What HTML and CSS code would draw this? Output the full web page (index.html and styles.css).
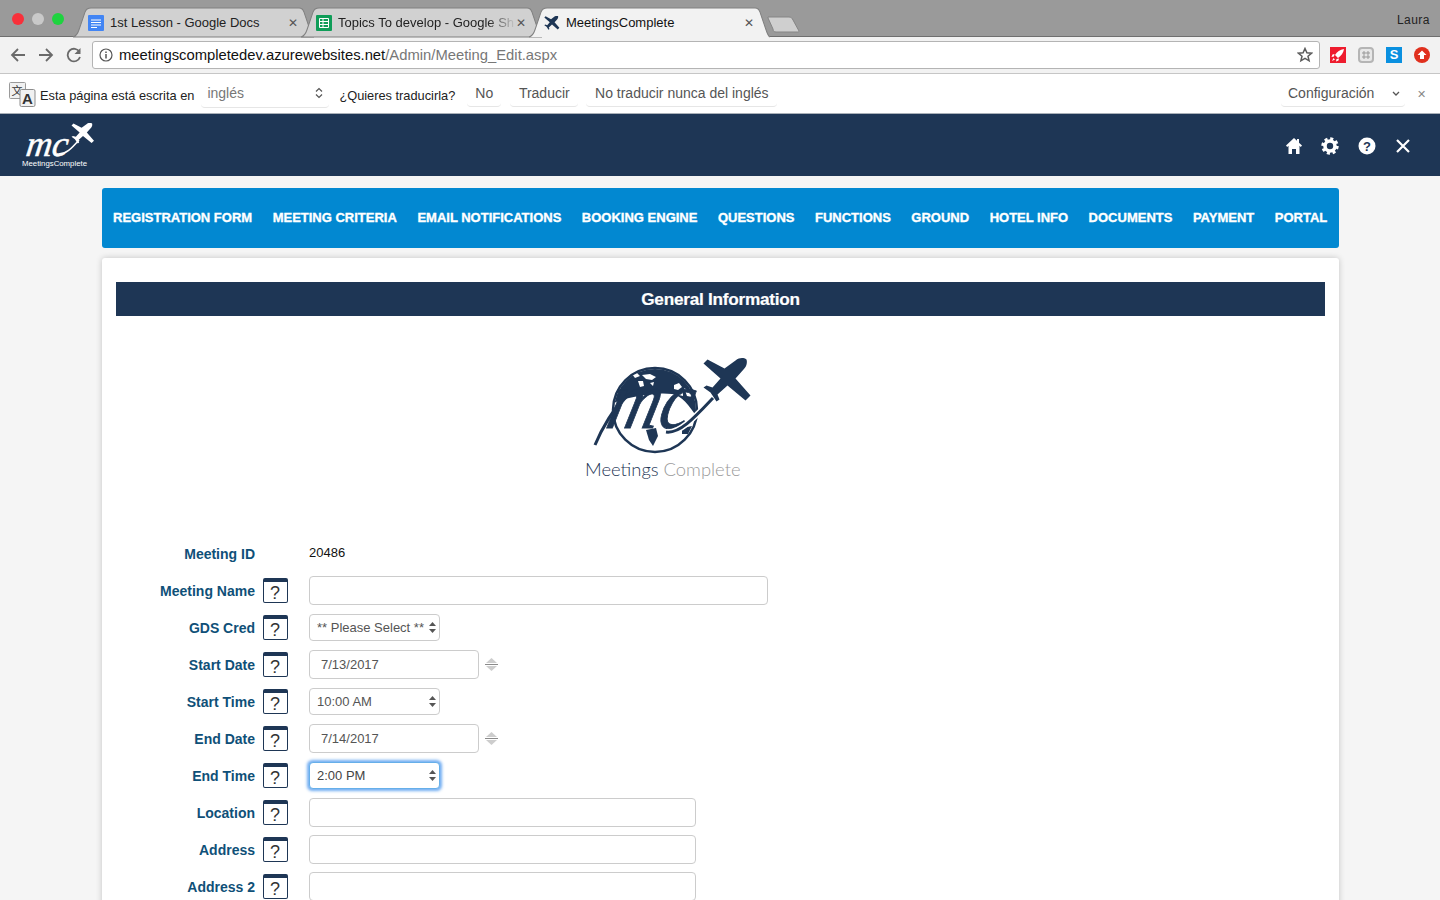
FILE: index.html
```html
<!DOCTYPE html>
<html lang="en">
<head>
<meta charset="utf-8">
<title>MeetingsComplete</title>
<link rel="stylesheet" href="styles.css">
</head>
<body>
<svg class="defs" width="0" height="0" aria-hidden="true">
  <defs>
    <symbol id="plane" viewBox="0 0 50 44">
      <path d="M1 5 L5 1 L22 10 L33 2 C37 -1 41 -1 44 1 C45 4 44 8 41 11 L33 20 L48 37 L43 42 L25 27 L15 36 L17 41 L14 43 L8 34 L1 29 L4 27 L10 29 L18 20 Z"/>
    </symbol>
  </defs>
</svg>

<header class="tabstrip">
  <div class="lights"><i class="light red"></i><i class="light grey"></i><i class="light green"></i></div>
  <div class="tabs">
    <div class="tab tab-one">
      <svg class="tab-shape" viewBox="0 0 241 28" preserveAspectRatio="none"><path d="M0 28 C4 27 5 24 6 21 L12 4 C13 1 15 0 18 0 L226 0 C229 0 230 1 231 4 L237 21 C238 24 239 27 241 28 Z" fill="#d1d1d1" stroke="#808080"/></svg>
      <svg class="favicon" viewBox="0 0 16 16"><rect width="16" height="16" rx="1" fill="#4285f4"/><path d="M3 5h10M3 7.5h10M3 10h10M3 12.5h6" stroke="#fff"/></svg>
      <span class="tab-title">1st Lesson - Google Docs</span>
      <span class="tab-close">✕</span>
    </div>
    <div class="tab tab-two">
      <svg class="tab-shape" viewBox="0 0 241 28" preserveAspectRatio="none"><path d="M0 28 C4 27 5 24 6 21 L12 4 C13 1 15 0 18 0 L226 0 C229 0 230 1 231 4 L237 21 C238 24 239 27 241 28 Z" fill="#d1d1d1" stroke="#808080"/></svg>
      <svg class="favicon" viewBox="0 0 16 16"><rect width="16" height="16" rx="1" fill="#0f9d58"/><path d="M3.5 3.5h9v9h-9zM3.5 6.5h9M3.5 9.500h9M7 3.500v9" fill="none" stroke="#fff"/></svg>
      <span class="tab-title tab-title-fade">Topics To develop - Google Sh</span>
      <span class="tab-close">✕</span>
    </div>
    <div class="tab tab-three">
      <svg class="tab-shape" viewBox="0 0 241 28" preserveAspectRatio="none"><path d="M0 28 C4 27 5 24 6 21 L12 4 C13 1 15 0 18 0 L226 0 C229 0 230 1 231 4 L237 21 C238 24 239 27 241 28" fill="#f2f2f2" stroke="#808080"/></svg>
      <svg class="favicon plane-dark" viewBox="0 0 50 44"><use href="#plane"/></svg>
      <span class="tab-title">MeetingsComplete</span>
      <span class="tab-close">✕</span>
    </div>
    <svg class="newtab" viewBox="0 0 33 17"><path d="M1 1 L22 1 C24 1 25 2 26 4 L32 15 C32 16 31 16 30 16 L9 16 C7 16 6 15 6 13 L1 2 Z" fill="#cfcfcf" stroke="#858585"/></svg>
  </div>
  <div class="profile">Laura</div>
</header>

<div class="toolbar">
  <svg class="nav-icon" viewBox="0 0 16 16"><path d="M15 8H2M8 2 2 8l6 6" fill="none" stroke="#6a6a6a" stroke-width="1.800"/></svg>
  <svg class="nav-icon" viewBox="0 0 16 16"><path d="M1 8h13M8 2l6 6-6 6" fill="none" stroke="#6a6a6a" stroke-width="1.800"/></svg>
  <svg class="nav-icon" viewBox="0 0 16 16"><path d="M13.500 5A6.300 6.300 0 1 0 14 10" fill="none" stroke="#6a6a6a" stroke-width="1.800"/><path d="M14.500 1v6h-6z" fill="#6a6a6a"/></svg>
  <div class="omnibox">
    <svg class="info-icon" viewBox="0 0 14 14"><circle cx="7" cy="7" r="6" fill="none" stroke="#555" stroke-width="1.200"/><path d="M7 6v4.500M7 3.500v1.500" stroke="#555" stroke-width="1.500"/></svg>
    <span class="url"><span class="url-host">meetingscompletedev.azurewebsites.net</span><span class="url-path">/Admin/Meeting_Edit.aspx</span></span>
    <svg class="star" viewBox="0 0 16 16"><path d="M8 1.500l1.900 4.300 4.600.4-3.500 3 1.100 4.600L8 11.400l-4.100 2.400L5 9.200l-3.500-3 4.600-.4z" fill="none" stroke="#5c5c5c" stroke-width="1.500"/></svg>
  </div>
  <div class="extensions">
    <svg class="ext" viewBox="0 0 16 16"><rect width="16" height="16" fill="#ee1c2e"/><path d="M14 2C10 2.500 7 5 5 8L8 11C11 9 13.500 6 14 2ZM4.500 7 2.500 7.500 1.500 10 4 9.500ZM9 11.500 8.500 13.500 6 14.500 6.500 12ZM3.500 11 2 14 5 12.500Z" fill="#fff"/></svg>
    <svg class="ext" viewBox="0 0 16 16"><rect x="1" y="1" width="14" height="14" rx="3" fill="#e8e8e8" stroke="#b5b5b5" stroke-width="2"/><path d="M6 4v8M10 4v8M4 6h8M4 10h8" stroke="#999"/></svg>
    <div class="ext ext-s">S</div>
    <svg class="ext" viewBox="0 0 16 16"><circle cx="8" cy="8" r="8" fill="#e0301e"/><path d="M8 3.500 12.500 8H10v4H6V8H3.500z" fill="#fff"/></svg>
  </div>
</div>

<div class="infobar">
  <svg class="translate-icon" viewBox="0 0 28 28">
    <rect x="1.500" y="1.500" width="16" height="16" rx="1" fill="#f1f1f1" stroke="#9a9a9a"/>
    <text x="3.500" y="13.500" class="translate-cjk">文</text>
    <rect x="12" y="8.500" width="15" height="17" rx="1.500" fill="#f1f1f1" stroke="#8d8d8d"/>
    <text x="14" y="23" class="translate-a">A</text>
  </svg>
  <span class="info-text info-lead">Esta página está escrita en</span>
  <div class="info-select"><span>inglés</span>
    <svg class="updown" viewBox="0 0 8 12"><path d="M1 4.500 4 1.500l3 3M1 7.500l3 3 3-3" fill="none" stroke="#555" stroke-width="1.200"/></svg>
  </div>
  <span class="info-text info-ask">¿Quieres traducirla?</span>
  <button class="info-btn btn-no">No</button>
  <button class="info-btn btn-tr">Traducir</button>
  <button class="info-btn btn-never">No traducir nunca del inglés</button>
  <div class="info-spacer"></div>
  <div class="info-config">Configuración
    <svg class="chev" viewBox="0 0 8 5"><path d="M1 1l3 3 3-3" fill="none" stroke="#555" stroke-width="1.300"/></svg>
  </div>
  <span class="info-close">✕</span>
</div>

<div class="appbar">
  <div class="app-logo">
    <svg class="app-logo-art" viewBox="0 0 75 34">
      <text transform="translate(3 33) skewX(-8)" class="app-mc">mc</text>
      <path d="M35 31 C44 32 50 25 57 17" fill="none" stroke="#fff" stroke-width="1.500"/>
      <use href="#plane" x="49" y="0" width="24" height="21" fill="#fff"/>
    </svg>
    <span class="app-logo-text">MeetingsComplete</span>
  </div>
  <div class="app-actions">
    <svg class="app-icon" viewBox="0 0 18 18"><path d="M9 1 1 8.500 2.200 10 3.500 8.800V17H7v-5h4v5h3.500V8.800L15.800 10 17 8.500 14 5.700V2h-2v1.800z" fill="#fff"/></svg>
    <svg class="app-icon" viewBox="0 0 18 18"><circle cx="9" cy="9" r="5" fill="none" stroke="#fff" stroke-width="3.600"/><circle cx="9" cy="9" r="7.200" fill="none" stroke="#fff" stroke-width="3" stroke-dasharray="3 2.650"/></svg>
    <svg class="app-icon" viewBox="0 0 18 18"><circle cx="9" cy="9" r="8.500" fill="#fff"/><text x="9" y="14" class="app-q">?</text></svg>
    <svg class="app-icon" viewBox="0 0 18 18"><path d="M3 3l12 12M15 3 3 15" stroke="#fff" stroke-width="2.200"/></svg>
  </div>
</div>

<main class="page">
  <nav class="mainnav">
    <a>REGISTRATION FORM</a><a>MEETING CRITERIA</a><a>EMAIL NOTIFICATIONS</a><a>BOOKING ENGINE</a><a>QUESTIONS</a><a>FUNCTIONS</a><a>GROUND</a><a>HOTEL INFO</a><a>DOCUMENTS</a><a>PAYMENT</a><a>PORTAL</a>
  </nav>
  <section class="card">
    <h1 class="card-title">General Information</h1>
    <div class="brand">
      <svg class="brand-art" viewBox="0 0 180 140">
        <defs><clipPath id="globe"><circle cx="75" cy="60" r="41"/></clipPath></defs>
        <circle cx="75" cy="60" r="42" fill="#fff" stroke="#1e3655" stroke-width="2.500"/>
        <g clip-path="url(#globe)">
          <path d="M30 15 H120 V72 C112 60 104 46 92 44 C76 42 52 46 36 52 L30 56 Z" fill="#1e3655"/>
          <path d="M52 24 L57 23 L60 26 L55 28 Z M62 25 L70 24 L76 27 L72 30 L66 29 Z M58 31 L63 31 L64 36 L60 37 Z M70 33 L74 32 L73 36 Z" fill="#fff"/>
          <path d="M94 35 L99 33 L102 37 L98 40 L94 39 Z M104 38 L110 41 L112 47 L107 46 Z M98 42 L103 42 L103 46 L99 45 Z" fill="#fff"/>
          <path d="M66 80 L76 78 L78 86 L73 96 L69 90 Z" fill="#1e3655"/>
          <path d="M102 78 L112 76 L108 84 L102 84 Z" fill="#1e3655"/>
        </g>
        <text transform="translate(24 78) skewX(-14) scale(1 1.150)" class="brand-mc">mc</text>
        <path d="M15 95 C22 78 34 58 46 46" fill="none" stroke="#1e3655" stroke-width="3"/>
        <path d="M86 82 C100 84 116 66 133 48" fill="none" stroke="#fff" stroke-width="6"/>
        <path d="M86 82 C100 84 116 66 133 48" fill="none" stroke="#1e3655" stroke-width="3"/>
        <use href="#plane" x="122.500" y="8" width="50" height="45" fill="#1e3655"/>
        <text x="5" y="126" class="brand-name">Meetings <tspan class="brand-name-light">Complete</tspan></text>
      </svg>
    </div>
    <form class="fields">
      <div class="row">
        <label class="row-label">Meeting ID</label>
        <span class="row-help-empty"></span>
        <span class="row-value">20486</span>
      </div>
      <div class="row">
        <label class="row-label">Meeting Name</label>
        <span class="help">?</span>
        <input class="control control-lg" type="text">
      </div>
      <div class="row">
        <label class="row-label">GDS Cred</label>
        <span class="help">?</span>
        <div class="select"><select class="control control-sel"><option>** Please Select **</option></select>
          <svg class="select-arrows" viewBox="0 0 7 11"><path d="M3.500 0 7 4H0zM3.500 11 0 7h7z"/></svg></div>
      </div>
      <div class="row">
        <label class="row-label">Start Date</label>
        <span class="help">?</span>
        <input class="control control-date" type="text" value="7/13/2017">
        <svg class="spinner" viewBox="0 0 13 15"><path d="M6.500 1 12 6H1z" fill="#cdcdcd"/><path d="M0 7.500h13" stroke="#8a8a8a"/><path d="M1 9h11l-5.500 5z" fill="#cdcdcd"/></svg>
      </div>
      <div class="row">
        <label class="row-label">Start Time</label>
        <span class="help">?</span>
        <div class="select"><select class="control control-sel"><option>10:00 AM</option></select>
          <svg class="select-arrows" viewBox="0 0 7 11"><path d="M3.500 0 7 4H0zM3.500 11 0 7h7z"/></svg></div>
      </div>
      <div class="row">
        <label class="row-label">End Date</label>
        <span class="help">?</span>
        <input class="control control-date" type="text" value="7/14/2017">
        <svg class="spinner" viewBox="0 0 13 15"><path d="M6.500 1 12 6H1z" fill="#cdcdcd"/><path d="M0 7.500h13" stroke="#8a8a8a"/><path d="M1 9h11l-5.500 5z" fill="#cdcdcd"/></svg>
      </div>
      <div class="row">
        <label class="row-label">End Time</label>
        <span class="help">?</span>
        <div class="select"><select class="control control-sel control-focus"><option>2:00 PM</option></select>
          <svg class="select-arrows" viewBox="0 0 7 11"><path d="M3.500 0 7 4H0zM3.500 11 0 7h7z"/></svg></div>
      </div>
      <div class="row">
        <label class="row-label">Location</label>
        <span class="help">?</span>
        <input class="control control-md" type="text">
      </div>
      <div class="row">
        <label class="row-label">Address</label>
        <span class="help">?</span>
        <input class="control control-md" type="text">
      </div>
      <div class="row">
        <label class="row-label">Address 2</label>
        <span class="help">?</span>
        <input class="control control-md" type="text">
      </div>
    </form>
  </section>
</main>
</body>
</html>
```

FILE: styles.css
```css
* { box-sizing: border-box; }
html, body { margin: 0; height: 900px; overflow: hidden; }
body { background: #f5f5f5; font-family: "Liberation Sans", Arial, sans-serif; color: #333; }
.defs { position: absolute; }

/* tab strip */
.tabstrip { height: 37px; background: #9a9a9a; border-bottom: 1px solid #6f6f6f; display: flex; position: relative; }
.lights { width: 73px; flex: none; display: flex; gap: 8px; padding: 13px 0 0 12px; }
.light { width: 12px; height: 12px; border-radius: 50%; }
.red { background: #f8303a; }
.grey { background: #c9c9c9; }
.green { background: #1ed33f; }
.tabs { display: flex; padding-top: 8px; flex: 1; }
.tab { width: 241px; height: 29px; margin-right: -13px; position: relative; display: flex; align-items: center; font-size: 13px; color: #222; }
.tab-shape { position: absolute; left: 0; top: 0; width: 100%; height: 100%; overflow: visible; }
.tab-three { z-index: 2; color: #111; }
.tab-two { z-index: 1; }
.tab > .favicon, .tab > span { position: relative; }
.favicon { width: 16px; height: 16px; margin-left: 15px; flex: none; }
.plane-dark { fill: #1e3655; }
.tab-title { margin-left: 6px; width: 178px; white-space: nowrap; overflow: hidden; }
.tab-title-fade { -webkit-mask-image: linear-gradient(90deg, #000 84%, transparent 100%); mask-image: linear-gradient(90deg, #000 84%, transparent 100%); }
.tab-close { font-size: 12px; color: #555; }
.newtab { width: 33px; height: 17px; margin: 8px 0 0 10px; position: relative; z-index: 0; }
.profile { position: absolute; right: 10px; top: 13px; font-size: 12px; color: #222; letter-spacing: .04em; }

/* toolbar */
.toolbar { height: 37px; background: #f2f2f2; border-bottom: 1px solid #c6c6c6; display: flex; align-items: center; padding: 0 10px 1px 10px; }
.nav-icon { width: 16px; height: 16px; margin-right: 12px; flex: none; }
.omnibox { width: 1228px; margin-left: -2px; height: 28px; background: #fff; border: 1px solid #b4b4b4; border-radius: 3px; display: flex; align-items: center; padding: 0 6px; }
.info-icon { width: 14px; height: 14px; flex: none; }
.url { font-size: 14.800px; margin-left: 6px; flex: 1; white-space: nowrap; }
.url-host { color: #111; }
.url-path { color: #777; }
.star { width: 16px; height: 16px; }
.extensions { display: flex; gap: 12px; margin-left: 10px; }
.ext { width: 16px; height: 16px; display: block; }
.ext-s { background: #0a90e0; color: #fff; font-weight: 700; font-size: 13px; text-align: center; line-height: 16px; }

/* translate bar */
.infobar { height: 40px; background: #fff; border-bottom: 1px solid #a9b0b8; display: flex; align-items: center; font-size: 14px; color: #444; }
.translate-icon { width: 28px; height: 28px; margin: 2px 3px 0 8px; flex: none; }
.translate-cjk { font: 11px "Noto Sans CJK SC", sans-serif; fill: #333; }
.translate-a { font: 700 15px "Liberation Sans", sans-serif; fill: #333; }
.info-text { color: #222; font-size: 12.800px; padding-top: 4px; white-space: nowrap; }
.info-lead { margin-left: 1px; }
.info-select { width: 128px; height: 28px; margin-left: 7px; padding: 0 6px; display: flex; align-items: center; justify-content: space-between; color: #777; border-bottom: 1px solid #e6e6e6; border-radius: 4px; }
.updown { width: 8px; height: 12px; }
.info-ask { margin-left: 10px; }
.info-btn { height: 27px; border: 0; border-bottom: 1px solid #e6e6e6; border-radius: 4px; background: #fff; font: 14px "Liberation Sans", sans-serif; color: #555; padding: 0; white-space: nowrap; }
.btn-no { margin-left: 12px; width: 34px; }
.btn-tr { margin-left: 9px; width: 68px; }
.btn-never { margin-left: 8px; width: 191px; }
.info-spacer { flex: 1; }
.info-config { width: 124px; height: 27px; padding-left: 7px; display: flex; align-items: center; justify-content: space-between; padding-right: 5px; border-bottom: 1px solid #e6e6e6; border-radius: 4px; color: #555; }
.chev { width: 8px; height: 5px; }
.info-close { font-size: 11px; color: #888; margin: 2px 14px 0 12px; }

/* app bar */
.appbar { height: 62px; background: #1e3655; display: flex; align-items: center; justify-content: space-between; padding: 0 28px 0 22px; }
.app-logo { display: flex; flex-direction: column; width: 75px; }
.app-logo-art { width: 75px; height: 34px; display: block; overflow: visible; }
.app-mc { font: italic 36px "Liberation Serif", serif; fill: #fff; stroke: #fff; stroke-width: .5px; }
.app-logo-text { font-size: 7.800px; line-height: 9px; color: #fff; white-space: nowrap; margin-top: 2px; }
.app-actions { display: flex; gap: 18.300px; margin-top: 2px; }
.app-icon { width: 18px; height: 18px; }
.app-q { font: 700 13px "Liberation Sans", sans-serif; fill: #1e3655; text-anchor: middle; }

/* page */
.page { padding: 12px 101px 0 102px; }
.mainnav { height: 60px; background: #0288d1; border-radius: 3px; display: flex; align-items: center; gap: 20.500px; padding: 0 11px 2px; }
.mainnav a { color: #fff; font-weight: 700; font-size: 13px; -webkit-text-stroke: .35px #fff; white-space: nowrap; }
.card { margin-top: 10px; background: #fff; border-radius: 3px; box-shadow: 0 0 6px rgba(0,0,0,.2); padding: 24px 0 0; height: 700px; }
.card-title { margin: 0 14px; height: 34px; line-height: 34px; background: #1e3655; color: #fff; text-align: center; font-size: 17.200px; font-weight: 700; letter-spacing: -.25px; -webkit-text-stroke: .2px #fff; }
.brand { height: 219px; padding: 34px 0 0 478px; }
.brand-art { display: block; width: 180px; height: 140px; }
.brand-mc { font: italic 72px "Liberation Serif", serif; fill: #1e3655; stroke: #1e3655; stroke-width: .8px; }
.brand-name { font: 300 18.400px Lato, sans-serif; fill: #1e3655; }
.brand-name-light { fill: #9a9a9a; }

/* form */
.fields { display: flex; flex-direction: column; }
.row { height: 37px; display: flex; align-items: center; }
.row-label { width: 153px; text-align: right; font-weight: 700; font-size: 14px; color: #0f5078; flex: none; }
.help { width: 25px; height: 25px; margin-left: 8px; margin-right: 21px; padding-right: 1px; flex: none; border: 1.500px solid #1e3655; border-top-width: 4px; border-radius: 2px; background: #fff; color: #333; font-size: 18px; line-height: 22px; text-align: center; }
.row-help-empty { width: 54px; flex: none; }
.row-value { font-size: 13px; color: #111; margin-top: -2px; }
.control { height: 29px; border: 1px solid #ccc; border-radius: 4px; background: #fff; font: 13px "Liberation Sans", sans-serif; color: #555; padding: 0 11px; display: block; outline: 0; }
.control-lg { width: 459px; }
.control-md { width: 387px; }
.control-date { width: 170px; }
.select { position: relative; width: 131px; height: 27px; }
.control-sel { width: 131px; height: 27px; padding: 0 7px; appearance: none; -webkit-appearance: none; }
.control-focus { border-color: #66afe9; box-shadow: 0 0 3px 1.500px rgba(90,160,240,.85); color: #444; }
.select-arrows { position: absolute; right: 4px; top: 8px; width: 7px; height: 11px; fill: #555; }
.spinner { width: 13px; height: 15px; margin-left: 6px; }
```
